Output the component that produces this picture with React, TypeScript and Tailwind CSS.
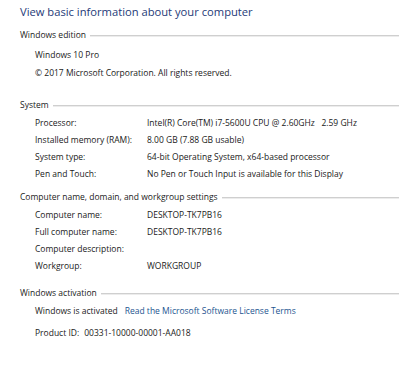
import React from "react";

const font = { fontFamily: '"Open Sans", "Noto Sans", sans-serif' };

function Header({ title, className = "" }: { title: string; className?: string }) {
  return (
    <div className={`flex items-center h-[14px] pl-[20px] ${className}`}>
      <span className="text-[8.5px] text-[#222] whitespace-nowrap leading-none">{title}</span>
      <div className="flex-1 ml-[4px] mt-[2px] h-[1px] bg-[#cfcfcf] border-b border-[#ececec] box-content" />
    </div>
  );
}

function Row({ label, value }: { label: string; value?: string }) {
  return (
    <div className="flex items-center h-[17px] pl-[35px] text-[8.5px] text-[#1a1a1a] whitespace-pre">
      <div className="w-[112px]">{label}</div>
      <div>{value}</div>
    </div>
  );
}

export default function App() {
  return (
    <div className="w-[399px] h-[365px] bg-white overflow-hidden" style={font}>
      <div className="pt-[3px] pl-[20px] h-[22px] text-[11.2px] leading-[18px] text-[#1e3a78] whitespace-nowrap">
        View basic information about your computer
      </div>
      <Header title="Windows edition" className="mt-[6px]" />
      <div className="mt-[4px] pl-[35px] text-[8.5px] text-[#1a1a1a]">
        <div className="h-[18px] flex items-center">Windows 10 Pro</div>
        <div className="h-[18px] flex items-center">© 2017 Microsoft Corporation. All rights reserved.</div>
      </div>
      <Header title="System" className="mt-[16px]" />
      <div className="mt-[3px]">
        <Row label="Processor:" value="Intel(R) Core(TM) i7-5600U CPU @ 2.60GHz   2.59 GHz" />
        <Row label="Installed memory (RAM):" value="8.00 GB (7.88 GB usable)" />
        <Row label="System type:" value="64-bit Operating System, x64-based processor" />
        <Row label="Pen and Touch:" value="No Pen or Touch Input is available for this Display" />
      </div>
      <Header title="Computer name, domain, and workgroup settings" className="mt-[7px]" />
      <div className="mt-[3px]">
        <Row label="Computer name:" value="DESKTOP-TK7PB16" />
        <Row label="Full computer name:" value="DESKTOP-TK7PB16" />
        <Row label="Computer description:" />
        <Row label="Workgroup:" value="WORKGROUP" />
      </div>
      <Header title="Windows activation" className="mt-[11px]" />
      <div className="mt-[2px] pl-[35px] h-[18px] flex items-center text-[8.5px] text-[#1a1a1a] whitespace-nowrap">
        <span>Windows is activated</span>
        <span className="ml-[7px] text-[#1c5590]">Read the Microsoft Software License Terms</span>
      </div>
      <div className="mt-[4px] pl-[35px] h-[18px] flex items-center text-[8.5px] text-[#1a1a1a] whitespace-nowrap">
        <span>Product ID:</span>
        <span className="ml-[5px]">00331-10000-00001-AA018</span>
      </div>
    </div>
  );
}
